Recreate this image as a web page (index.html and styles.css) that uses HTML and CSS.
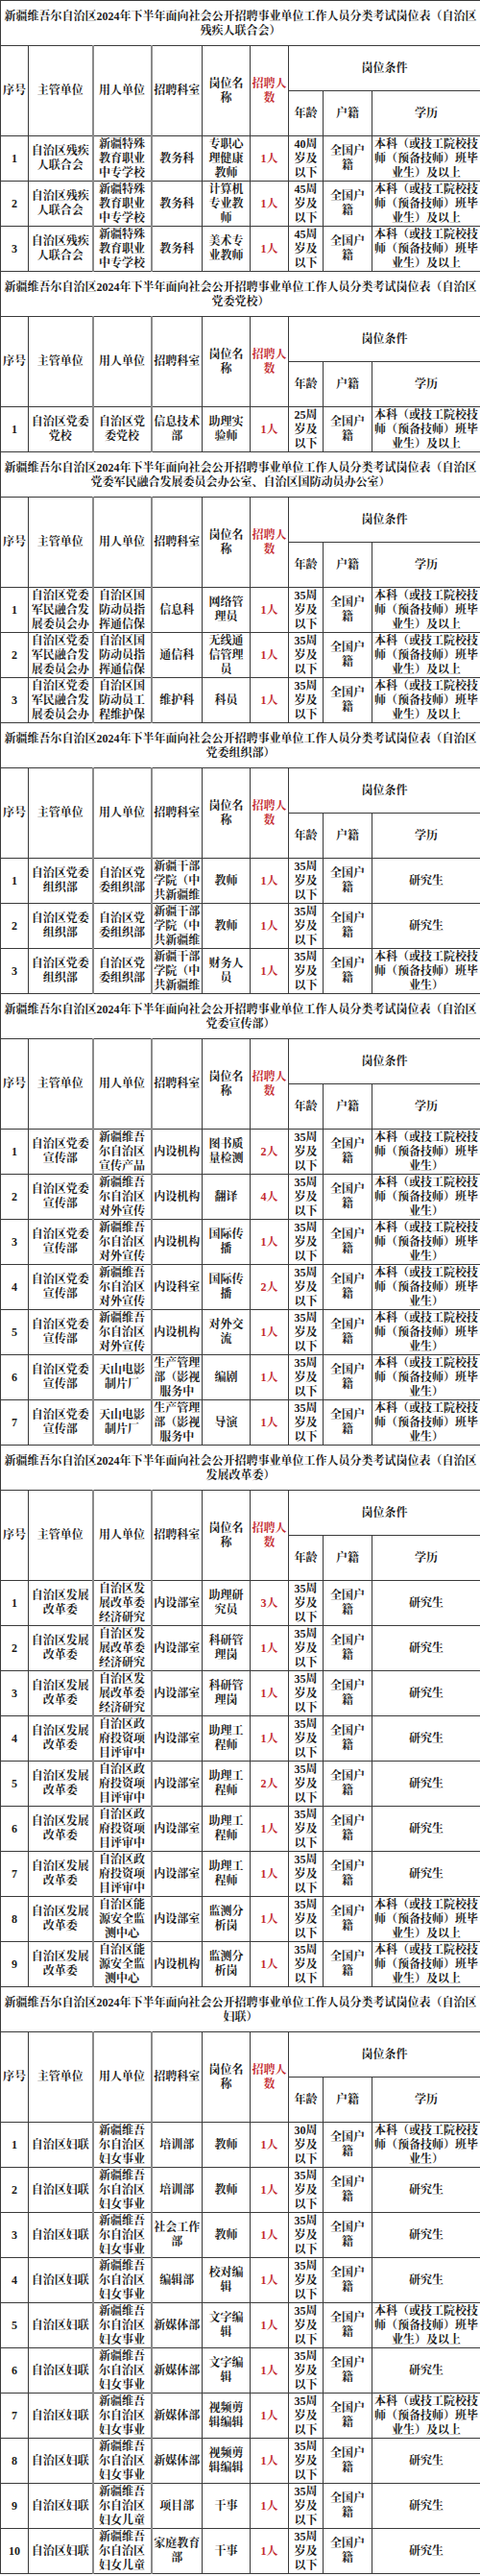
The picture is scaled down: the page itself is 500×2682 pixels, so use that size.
FILE: index.html
```html
<!DOCTYPE html>
<html lang="zh-CN">
<head>
<meta charset="utf-8">
<title>岗位表</title>
<link rel="stylesheet" href="styles.css">
</head>
<body>
<table class="sheet">
<colgroup>
<col class="c-no"><col class="c-org"><col class="c-unit"><col class="c-dept"><col class="c-post"><col class="c-num"><col class="c-age"><col class="c-hk"><col class="c-edu">
</colgroup>

<tbody>
<tr><td class="title" colspan="9">新疆维吾尔自治区2024年下半年面向社会公开招聘事业单位工作人员分类考试岗位表（自治区<br>残疾人联合会）</td></tr>
<tr><th rowspan="2">序号</th><th rowspan="2">主管单位</th><th rowspan="2" class="unit">用人单位</th><th rowspan="2">招聘科室</th><th rowspan="2">岗位名<br>称</th><th rowspan="2" class="red">招聘人<br>数</th><th colspan="3">岗位条件</th></tr>
<tr><th>年龄</th><th>户籍</th><th>学历</th></tr>
<tr><td>1</td><td>自治区残疾<br>人联合会</td><td class="unit">新疆特殊<br>教育职业<br>中专学校</td><td>教务科</td><td>专职心<br>理健康<br>教师</td><td class="red">1人</td><td>40周<br>岁及<br>以下</td><td>全国户<br>籍</td><td>本科（或技工院校技<br>师（预备技师）班毕<br>业生）及以上</td></tr>
<tr><td>2</td><td>自治区残疾<br>人联合会</td><td class="unit">新疆特殊<br>教育职业<br>中专学校</td><td>教务科</td><td>计算机<br>专业教<br>师</td><td class="red">1人</td><td>45周<br>岁及<br>以下</td><td>全国户<br>籍</td><td>本科（或技工院校技<br>师（预备技师）班毕<br>业生）及以上</td></tr>
<tr><td>3</td><td>自治区残疾<br>人联合会</td><td class="unit">新疆特殊<br>教育职业<br>中专学校</td><td>教务科</td><td>美术专<br>业教师</td><td class="red">1人</td><td>45周<br>岁及<br>以下</td><td>全国户<br>籍</td><td>本科（或技工院校技<br>师（预备技师）班毕<br>业生）及以上</td></tr>
</tbody>

<tbody>
<tr><td class="title" colspan="9">新疆维吾尔自治区2024年下半年面向社会公开招聘事业单位工作人员分类考试岗位表（自治区<br>党委党校）</td></tr>
<tr><th rowspan="2">序号</th><th rowspan="2">主管单位</th><th rowspan="2" class="unit">用人单位</th><th rowspan="2">招聘科室</th><th rowspan="2">岗位名<br>称</th><th rowspan="2" class="red">招聘人<br>数</th><th colspan="3">岗位条件</th></tr>
<tr><th>年龄</th><th>户籍</th><th>学历</th></tr>
<tr><td>1</td><td>自治区党委<br>党校</td><td class="unit">自治区党<br>委党校</td><td>信息技术<br>部</td><td>助理实<br>验师</td><td class="red">1人</td><td>25周<br>岁及<br>以下</td><td>全国户<br>籍</td><td>本科（或技工院校技<br>师（预备技师）班毕<br>业生）及以上</td></tr>
</tbody>

<tbody>
<tr><td class="title" colspan="9">新疆维吾尔自治区2024年下半年面向社会公开招聘事业单位工作人员分类考试岗位表（自治区<br>党委军民融合发展委员会办公室、自治区国防动员办公室）</td></tr>
<tr><th rowspan="2">序号</th><th rowspan="2">主管单位</th><th rowspan="2" class="unit">用人单位</th><th rowspan="2">招聘科室</th><th rowspan="2">岗位名<br>称</th><th rowspan="2" class="red">招聘人<br>数</th><th colspan="3">岗位条件</th></tr>
<tr><th>年龄</th><th>户籍</th><th>学历</th></tr>
<tr><td>1</td><td>自治区党委<br>军民融合发<br>展委员会办</td><td class="unit">自治区国<br>防动员指<br>挥通信保</td><td>信息科</td><td>网络管<br>理员</td><td class="red">1人</td><td>35周<br>岁及<br>以下</td><td>全国户<br>籍</td><td>本科（或技工院校技<br>师（预备技师）班毕<br>业生）及以上</td></tr>
<tr><td>2</td><td>自治区党委<br>军民融合发<br>展委员会办</td><td class="unit">自治区国<br>防动员指<br>挥通信保</td><td>通信科</td><td>无线通<br>信管理<br>员</td><td class="red">1人</td><td>35周<br>岁及<br>以下</td><td>全国户<br>籍</td><td>本科（或技工院校技<br>师（预备技师）班毕<br>业生）及以上</td></tr>
<tr><td>3</td><td>自治区党委<br>军民融合发<br>展委员会办</td><td class="unit">自治区国<br>防动员工<br>程维护保</td><td>维护科</td><td>科员</td><td class="red">1人</td><td>35周<br>岁及<br>以下</td><td>全国户<br>籍</td><td>本科（或技工院校技<br>师（预备技师）班毕<br>业生）及以上</td></tr>
</tbody>

<tbody>
<tr><td class="title" colspan="9">新疆维吾尔自治区2024年下半年面向社会公开招聘事业单位工作人员分类考试岗位表（自治区<br>党委组织部）</td></tr>
<tr><th rowspan="2">序号</th><th rowspan="2">主管单位</th><th rowspan="2" class="unit">用人单位</th><th rowspan="2">招聘科室</th><th rowspan="2">岗位名<br>称</th><th rowspan="2" class="red">招聘人<br>数</th><th colspan="3">岗位条件</th></tr>
<tr><th>年龄</th><th>户籍</th><th>学历</th></tr>
<tr><td>1</td><td>自治区党委<br>组织部</td><td class="unit">自治区党<br>委组织部</td><td>新疆干部<br>学院（中<br>共新疆维</td><td>教师</td><td class="red">1人</td><td>35周<br>岁及<br>以下</td><td>全国户<br>籍</td><td>研究生</td></tr>
<tr><td>2</td><td>自治区党委<br>组织部</td><td class="unit">自治区党<br>委组织部</td><td>新疆干部<br>学院（中<br>共新疆维</td><td>教师</td><td class="red">1人</td><td>35周<br>岁及<br>以下</td><td>全国户<br>籍</td><td>研究生</td></tr>
<tr><td>3</td><td>自治区党委<br>组织部</td><td class="unit">自治区党<br>委组织部</td><td>新疆干部<br>学院（中<br>共新疆维</td><td>财务人<br>员</td><td class="red">1人</td><td>35周<br>岁及<br>以下</td><td>全国户<br>籍</td><td>本科（或技工院校技<br>师（预备技师）班毕<br>业生）</td></tr>
</tbody>

<tbody>
<tr><td class="title" colspan="9">新疆维吾尔自治区2024年下半年面向社会公开招聘事业单位工作人员分类考试岗位表（自治区<br>党委宣传部）</td></tr>
<tr><th rowspan="2">序号</th><th rowspan="2">主管单位</th><th rowspan="2" class="unit">用人单位</th><th rowspan="2">招聘科室</th><th rowspan="2">岗位名<br>称</th><th rowspan="2" class="red">招聘人<br>数</th><th colspan="3">岗位条件</th></tr>
<tr><th>年龄</th><th>户籍</th><th>学历</th></tr>
<tr><td>1</td><td>自治区党委<br>宣传部</td><td class="unit">新疆维吾<br>尔自治区<br>宣传产品</td><td>内设机构</td><td>图书质<br>量检测</td><td class="red">2人</td><td>35周<br>岁及<br>以下</td><td>全国户<br>籍</td><td>本科（或技工院校技<br>师（预备技师）班毕<br>业生）</td></tr>
<tr><td>2</td><td>自治区党委<br>宣传部</td><td class="unit">新疆维吾<br>尔自治区<br>对外宣传</td><td>内设机构</td><td>翻译</td><td class="red">4人</td><td>35周<br>岁及<br>以下</td><td>全国户<br>籍</td><td>本科（或技工院校技<br>师（预备技师）班毕<br>业生）</td></tr>
<tr><td>3</td><td>自治区党委<br>宣传部</td><td class="unit">新疆维吾<br>尔自治区<br>对外宣传</td><td>内设机构</td><td>国际传<br>播</td><td class="red">1人</td><td>35周<br>岁及<br>以下</td><td>全国户<br>籍</td><td>本科（或技工院校技<br>师（预备技师）班毕<br>业生）</td></tr>
<tr><td>4</td><td>自治区党委<br>宣传部</td><td class="unit">新疆维吾<br>尔自治区<br>对外宣传</td><td>内设科室</td><td>国际传<br>播</td><td class="red">2人</td><td>35周<br>岁及<br>以下</td><td>全国户<br>籍</td><td>本科（或技工院校技<br>师（预备技师）班毕<br>业生）</td></tr>
<tr><td>5</td><td>自治区党委<br>宣传部</td><td class="unit">新疆维吾<br>尔自治区<br>对外宣传</td><td>内设机构</td><td>对外交<br>流</td><td class="red">1人</td><td>35周<br>岁及<br>以下</td><td>全国户<br>籍</td><td>本科（或技工院校技<br>师（预备技师）班毕<br>业生）</td></tr>
<tr><td>6</td><td>自治区党委<br>宣传部</td><td class="unit">天山电影<br>制片厂</td><td>生产管理<br>部（影视<br>服务中</td><td>编剧</td><td class="red">1人</td><td>35周<br>岁及<br>以下</td><td>全国户<br>籍</td><td>本科（或技工院校技<br>师（预备技师）班毕<br>业生）</td></tr>
<tr><td>7</td><td>自治区党委<br>宣传部</td><td class="unit">天山电影<br>制片厂</td><td>生产管理<br>部（影视<br>服务中</td><td>导演</td><td class="red">1人</td><td>35周<br>岁及<br>以下</td><td>全国户<br>籍</td><td>本科（或技工院校技<br>师（预备技师）班毕<br>业生）</td></tr>
</tbody>

<tbody>
<tr><td class="title" colspan="9">新疆维吾尔自治区2024年下半年面向社会公开招聘事业单位工作人员分类考试岗位表（自治区<br>发展改革委）</td></tr>
<tr><th rowspan="2">序号</th><th rowspan="2">主管单位</th><th rowspan="2" class="unit">用人单位</th><th rowspan="2">招聘科室</th><th rowspan="2">岗位名<br>称</th><th rowspan="2" class="red">招聘人<br>数</th><th colspan="3">岗位条件</th></tr>
<tr><th>年龄</th><th>户籍</th><th>学历</th></tr>
<tr><td>1</td><td>自治区发展<br>改革委</td><td class="unit">自治区发<br>展改革委<br>经济研究</td><td>内设部室</td><td>助理研<br>究员</td><td class="red">3人</td><td>35周<br>岁及<br>以下</td><td>全国户<br>籍</td><td>研究生</td></tr>
<tr><td>2</td><td>自治区发展<br>改革委</td><td class="unit">自治区发<br>展改革委<br>经济研究</td><td>内设部室</td><td>科研管<br>理岗</td><td class="red">1人</td><td>35周<br>岁及<br>以下</td><td>全国户<br>籍</td><td>研究生</td></tr>
<tr><td>3</td><td>自治区发展<br>改革委</td><td class="unit">自治区发<br>展改革委<br>经济研究</td><td>内设部室</td><td>科研管<br>理岗</td><td class="red">1人</td><td>35周<br>岁及<br>以下</td><td>全国户<br>籍</td><td>研究生</td></tr>
<tr><td>4</td><td>自治区发展<br>改革委</td><td class="unit">自治区政<br>府投资项<br>目评审中</td><td>内设部室</td><td>助理工<br>程师</td><td class="red">1人</td><td>35周<br>岁及<br>以下</td><td>全国户<br>籍</td><td>研究生</td></tr>
<tr><td>5</td><td>自治区发展<br>改革委</td><td class="unit">自治区政<br>府投资项<br>目评审中</td><td>内设部室</td><td>助理工<br>程师</td><td class="red">2人</td><td>35周<br>岁及<br>以下</td><td>全国户<br>籍</td><td>研究生</td></tr>
<tr><td>6</td><td>自治区发展<br>改革委</td><td class="unit">自治区政<br>府投资项<br>目评审中</td><td>内设部室</td><td>助理工<br>程师</td><td class="red">1人</td><td>35周<br>岁及<br>以下</td><td>全国户<br>籍</td><td>研究生</td></tr>
<tr><td>7</td><td>自治区发展<br>改革委</td><td class="unit">自治区政<br>府投资项<br>目评审中</td><td>内设部室</td><td>助理工<br>程师</td><td class="red">1人</td><td>35周<br>岁及<br>以下</td><td>全国户<br>籍</td><td>研究生</td></tr>
<tr><td>8</td><td>自治区发展<br>改革委</td><td class="unit">自治区能<br>源安全监<br>测中心</td><td>内设部室</td><td>监测分<br>析岗</td><td class="red">1人</td><td>35周<br>岁及<br>以下</td><td>全国户<br>籍</td><td>本科（或技工院校技<br>师（预备技师）班毕<br>业生）及以上</td></tr>
<tr><td>9</td><td>自治区发展<br>改革委</td><td class="unit">自治区能<br>源安全监<br>测中心</td><td>内设机构</td><td>监测分<br>析岗</td><td class="red">1人</td><td>35周<br>岁及<br>以下</td><td>全国户<br>籍</td><td>本科（或技工院校技<br>师（预备技师）班毕<br>业生）及以上</td></tr>
</tbody>

<tbody>
<tr><td class="title" colspan="9">新疆维吾尔自治区2024年下半年面向社会公开招聘事业单位工作人员分类考试岗位表（自治区<br>妇联）</td></tr>
<tr><th rowspan="2">序号</th><th rowspan="2">主管单位</th><th rowspan="2" class="unit">用人单位</th><th rowspan="2">招聘科室</th><th rowspan="2">岗位名<br>称</th><th rowspan="2" class="red">招聘人<br>数</th><th colspan="3">岗位条件</th></tr>
<tr><th>年龄</th><th>户籍</th><th>学历</th></tr>
<tr><td>1</td><td>自治区妇联</td><td class="unit">新疆维吾<br>尔自治区<br>妇女事业</td><td>培训部</td><td>教师</td><td class="red">1人</td><td>30周<br>岁及<br>以下</td><td>全国户<br>籍</td><td>本科（或技工院校技<br>师（预备技师）班毕<br>业生）</td></tr>
<tr><td>2</td><td>自治区妇联</td><td class="unit">新疆维吾<br>尔自治区<br>妇女事业</td><td>培训部</td><td>教师</td><td class="red">1人</td><td>35周<br>岁及<br>以下</td><td>全国户<br>籍</td><td>研究生</td></tr>
<tr><td>3</td><td>自治区妇联</td><td class="unit">新疆维吾<br>尔自治区<br>妇女事业</td><td>社会工作<br>部</td><td>教师</td><td class="red">1人</td><td>35周<br>岁及<br>以下</td><td>全国户<br>籍</td><td>研究生</td></tr>
<tr><td>4</td><td>自治区妇联</td><td class="unit">新疆维吾<br>尔自治区<br>妇女事业</td><td>编辑部</td><td>校对编<br>辑</td><td class="red">1人</td><td>35周<br>岁及<br>以下</td><td>全国户<br>籍</td><td>研究生</td></tr>
<tr><td>5</td><td>自治区妇联</td><td class="unit">新疆维吾<br>尔自治区<br>妇女事业</td><td>新媒体部</td><td>文字编<br>辑</td><td class="red">1人</td><td>35周<br>岁及<br>以下</td><td>全国户<br>籍</td><td>本科（或技工院校技<br>师（预备技师）班毕<br>业生）及以上</td></tr>
<tr><td>6</td><td>自治区妇联</td><td class="unit">新疆维吾<br>尔自治区<br>妇女事业</td><td>新媒体部</td><td>文字编<br>辑</td><td class="red">1人</td><td>35周<br>岁及<br>以下</td><td>全国户<br>籍</td><td>研究生</td></tr>
<tr><td>7</td><td>自治区妇联</td><td class="unit">新疆维吾<br>尔自治区<br>妇女事业</td><td>新媒体部</td><td>视频剪<br>辑编辑</td><td class="red">1人</td><td>35周<br>岁及<br>以下</td><td>全国户<br>籍</td><td>本科（或技工院校技<br>师（预备技师）班毕<br>业生）及以上</td></tr>
<tr><td>8</td><td>自治区妇联</td><td class="unit">新疆维吾<br>尔自治区<br>妇女事业</td><td>新媒体部</td><td>视频剪<br>辑编辑</td><td class="red">1人</td><td>35周<br>岁及<br>以下</td><td>全国户<br>籍</td><td>研究生</td></tr>
<tr><td>9</td><td>自治区妇联</td><td class="unit">新疆维吾<br>尔自治区<br>妇女儿童</td><td>项目部</td><td>干事</td><td class="red">1人</td><td>35周<br>岁及<br>以下</td><td>全国户<br>籍</td><td>研究生</td></tr>
<tr><td>10</td><td>自治区妇联</td><td class="unit">新疆维吾<br>尔自治区<br>妇女儿童</td><td>家庭教育<br>部</td><td>干事</td><td class="red">1人</td><td>35周<br>岁及<br>以下</td><td>全国户<br>籍</td><td>研究生</td></tr>
</tbody>
</table>
</body>
</html>
```

FILE: styles.css
```css
html, body {
  margin: 0;
  padding: 0;
  background: #fff;
}

body {
  font-family: "Liberation Serif", "Noto Serif CJK SC", "Noto Sans CJK SC", serif;
  font-size: 12px;
  line-height: 15px;
  font-weight: 700;
  color: #1c1c1c;
}

.sheet {
  width: 500px;
  border-collapse: collapse;
  table-layout: fixed;
}

.sheet tr {
  height: 47px;
}

.sheet td,
.sheet th {
  border: 1px solid #3a3a3a;
  padding: 0;
  text-align: center;
  vertical-align: middle;
  font-weight: 700;
  white-space: nowrap;
  overflow: hidden;
}

.sheet .unit {
  border-left: 2px solid #8a8a8a;
  border-right: 2px solid #8a8a8a;
}

.sheet .title {
  padding-top: 1px;
}

.sheet .red {
  color: #c42a30;
}

.c-no { width: 29px; }
.c-org { width: 67px; }
.c-unit { width: 61px; }
.c-dept { width: 53px; }
.c-post { width: 50px; }
.c-num { width: 40px; }
.c-age { width: 36px; }
.c-hk { width: 51px; }
.c-edu { width: 113px; }
```
